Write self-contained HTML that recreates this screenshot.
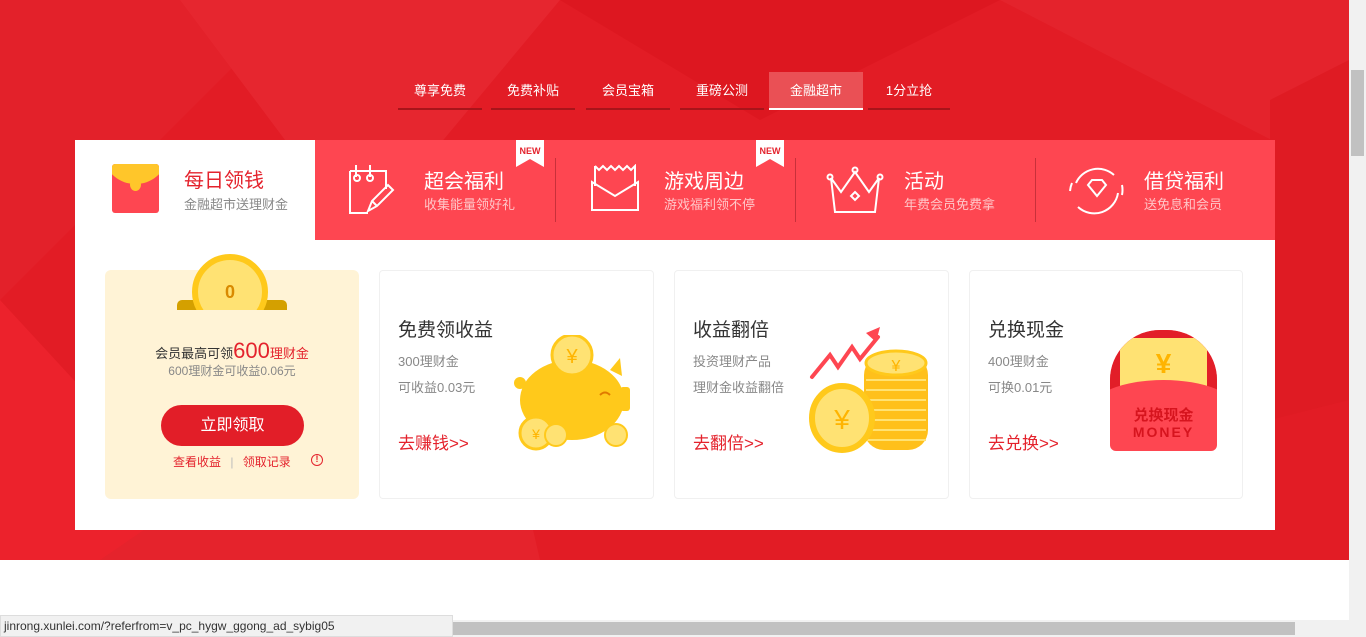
<!DOCTYPE html>
<html><head><meta charset="utf-8"><style>
*{margin:0;padding:0;box-sizing:border-box}
body{width:1366px;height:637px;overflow:hidden;background:#fff;font-family:"Liberation Sans","Noto Sans CJK SC",sans-serif;position:relative}
.abs{position:absolute}
.bg{left:0;top:0;width:1349px;height:560px;background:#e21c25;overflow:hidden}
.nav a{position:absolute;top:72px;height:38px;width:84px;color:#fff;font-size:13px;text-align:center;line-height:38px;border-bottom:2px solid #a8141a;text-decoration:none}
.nav a.on{background:#ea5055;border-bottom:2px solid #fff}
.panel{left:75px;top:140px;width:1200px;height:390px;background:#fff}
.tabs{left:315px;top:140px;width:960px;height:100px;background:#fe4651}
.t h3{position:absolute;font-size:20px;font-weight:normal;color:#fff}
.t p{position:absolute;font-size:13px;color:#ffc6c8}
.div{top:158px;width:1px;height:64px;background:#c8303a}
.card{top:270px;height:229px;border:1px solid #f0f0f0;border-radius:4px;background:#fff}
.card h4{position:absolute;left:18px;top:44px;font-size:19px;font-weight:normal;color:#333}
.card .s{position:absolute;left:18px;font-size:13px;color:#888}
.card .go{position:absolute;left:18px;top:158px;font-size:17px;color:#e4232d}
</style></head><body>
<div class="abs bg">
<svg width="1349" height="560" style="position:absolute;left:0;top:0">
<polygon points="0,0 300,0 0,300" fill="#e3212a"/>
<polygon points="180,0 560,0 360,240" fill="#e6262f"/>
<polygon points="560,0 1000,0 760,120" fill="#dd1720"/>
<polygon points="1000,0 1349,0 1349,180" fill="#e4232c"/>
<polygon points="0,300 240,560 0,560" fill="#ec222c"/>
<polygon points="100,560 480,300 540,560" fill="#e5232c"/>
<polygon points="1270,100 1349,60 1349,400 1270,420" fill="#df1b23"/>
</svg>
</div>
<div class="nav">
<a style="left:398px">尊享免费</a><a style="left:491px">免费补贴</a><a style="left:586px">会员宝箱</a><a style="left:680px">重磅公测</a><a class="on" style="left:769px;width:94px">金融超市</a><a style="left:868px;width:82px">1分立抢</a>
</div>
<div class="abs panel"></div>
<div class="abs tabs"></div>
<div class="abs" style="left:112px;top:164px;width:47px;height:49px;background:#fe4651;border-radius:3px;overflow:hidden">
<div style="position:absolute;left:-6px;top:-30px;width:59px;height:50px;border-radius:50%;background:#ffc62a"></div>
<div style="position:absolute;left:18px;top:14px;width:11px;height:13px;border-radius:50%;background:#ffc62a"></div></div>
<div class="abs" style="left:184px;top:164px;font-size:20px;color:#e4232d">每日领钱</div>
<div class="abs" style="left:184px;top:194px;font-size:13px;color:#888">金融超市送理财金</div>
<div class="t">
<svg class="abs" style="left:348px;top:163px" width="48" height="52" fill="none" stroke="#fff" stroke-width="2"><path d="M2 8h36v18M2 8v42h18"/><path d="M8 2v12M22 2v12"/><circle cx="9" cy="15" r="3"/><circle cx="22" cy="15" r="3"/><path d="M20 48l4-10 16-16 5 5-16 16zM24 38l5 5"/></svg>
<h3 style="left:424px;top:165px">超会福利</h3><p style="left:424px;top:194px">收集能量领好礼</p>
<svg class="abs" style="left:591px;top:164px" width="48" height="48" fill="none" stroke="#fff" stroke-width="2"><path d="M4 2l4 4 4-4 4 4 4-4 4 4 4-4 4 4 4-4 4 4 4-4v20M4 2v20"/><path d="M1 18v28h46V18L24 32z"/></svg>
<h3 style="left:664px;top:165px">游戏周边</h3><p style="left:664px;top:194px">游戏福利领不停</p>
<svg class="abs" style="left:826px;top:166px" width="58" height="48" fill="none" stroke="#fff" stroke-width="2"><path d="M5 12l10 14 14-20 14 20 10-14-4 34H9z"/><circle cx="29" cy="4" r="2.5"/><circle cx="4" cy="11" r="2.5"/><circle cx="54" cy="11" r="2.5"/><path d="M29 26l4 4-4 4-4-4z"/></svg>
<h3 style="left:904px;top:165px">活动</h3><p style="left:904px;top:194px">年费会员免费拿</p>
<svg class="abs" style="left:1068px;top:163px" width="56" height="54" fill="none" stroke="#fff" stroke-width="2"><path d="M8 20A24 24 0 0 1 46 12M50 30A24 24 0 0 1 10 44M2 28A25 25 0 0 1 4 20M54 22a25 25 0 0 1 0 10"/><path d="M20 22l4-5h10l4 5-9 11z"/></svg>
<h3 style="left:1144px;top:165px">借贷福利</h3><p style="left:1144px;top:194px">送免息和会员</p>
</div>
<div class="abs div" style="left:555px"></div><div class="abs div" style="left:795px"></div><div class="abs div" style="left:1035px"></div>
<svg class="abs" style="left:516px;top:140px" width="28" height="28"><path d="M0 0h28v27l-14-8-14 8z" fill="#fff"/><text x="14" y="14" fill="#e4232d" font-size="9" font-weight="bold" text-anchor="middle" font-family="Liberation Sans">NEW</text></svg>
<svg class="abs" style="left:756px;top:140px" width="28" height="28"><path d="M0 0h28v27l-14-8-14 8z" fill="#fff"/><text x="14" y="14" fill="#e4232d" font-size="9" font-weight="bold" text-anchor="middle" font-family="Liberation Sans">NEW</text></svg>
<div class="abs" style="left:105px;top:270px;width:254px;height:229px;background:#fff3d6;border-radius:6px"></div>
<div class="abs" style="left:177px;top:300px;width:110px;height:10px;background:#d4a000;border-radius:5px 5px 0 0"></div>
<div class="abs" style="left:186px;top:254px;width:88px;height:56px;overflow:hidden"><div style="position:absolute;left:6px;top:0;width:76px;height:76px;border-radius:50%;background:#ffe273;border:6px solid #ffc91b"></div><div style="position:absolute;left:0;width:88px;top:28px;text-align:center;font-size:18px;font-weight:bold;color:#d98a00">0</div></div>
<div class="abs" style="left:105px;width:254px;top:338px;text-align:center;font-size:13px;color:#333">会员最高可领<span style="font-size:22px;color:#e4232d">600</span><span style="color:#e4232d">理财金</span></div>
<div class="abs" style="left:105px;width:254px;top:362px;text-align:center;font-size:12px;color:#888">600理财金可收益0.06元</div>
<div class="abs" style="left:161px;top:405px;width:143px;height:41px;background:#e21e28;border-radius:21px;color:#fff;font-size:16px;text-align:center;line-height:41px">立即领取</div>
<div class="abs" style="left:173px;top:453px;font-size:12px;color:#e4232d">查看收益 <span style="color:#bbb;margin:0 6px">|</span> 领取记录</div>
<div class="abs" style="left:311px;top:454px;width:12px;height:12px;border:1.5px solid #e4232d;border-radius:50%;color:#e4232d;font-size:9px;text-align:center;line-height:9px;font-weight:bold">!</div>
<div class="abs card" style="left:379px;width:275px"><h4>免费领收益</h4><div class="s" style="top:80px">300理财金</div><div class="s" style="top:106px">可收益0.03元</div><div class="go">去赚钱&gt;&gt;</div></div>
<svg class="abs" style="left:510px;top:335px" width="130" height="118"><ellipse cx="62" cy="65" rx="52" ry="40" fill="#ffc91b"/><path d="M100 35l10-12 2 18z" fill="#ffc91b"/><rect x="110" y="52" width="10" height="24" rx="3" fill="#ffc91b"/><circle cx="10" cy="48" r="6" fill="#ffc91b"/><circle cx="62" cy="20" r="20" fill="#ffe273" stroke="#ffc91b" stroke-width="3"/><text x="62" y="28" font-size="20" fill="#ffb400" text-anchor="middle">¥</text><path d="M90 60q5-5 10 0" stroke="#e07a00" stroke-width="2" fill="none"/><circle cx="26" cy="98" r="16" fill="#ffe273" stroke="#ffc91b" stroke-width="3"/><text x="26" y="104" font-size="14" fill="#ffb400" text-anchor="middle">¥</text><circle cx="46" cy="100" r="11" fill="#ffe273" stroke="#ffc91b" stroke-width="2"/><circle cx="106" cy="100" r="11" fill="#ffe273" stroke="#ffc91b" stroke-width="2"/></svg>
<div class="abs card" style="left:674px;width:275px"><h4>收益翻倍</h4><div class="s" style="top:80px">投资理财产品</div><div class="s" style="top:106px">理财金收益翻倍</div><div class="go">去翻倍&gt;&gt;</div></div>
<svg class="abs" style="left:806px;top:325px" width="125" height="130"><path d="M6 52l18-22 8 12 14-20 8 12 18-22" stroke="#fe4651" stroke-width="4" fill="none" stroke-linecap="round"/><path d="M60 8l14-6-4 15z" fill="#fe4651"/><rect x="58" y="30" width="64" height="95" rx="20" fill="#ffc01b"/><g stroke="#ffe273" stroke-width="2"><path d="M60 55h60M60 65h60M60 75h60M60 85h60M60 95h60M60 105h60M60 115h60"/></g><ellipse cx="90" cy="38" rx="30" ry="12" fill="#ffe273" stroke="#ffc91b" stroke-width="3"/><text x="90" y="46" font-size="16" fill="#ffb400" text-anchor="middle">¥</text><ellipse cx="36" cy="93" rx="30" ry="32" fill="#ffe273" stroke="#ffc91b" stroke-width="6"/><text x="36" y="104" font-size="28" fill="#ffb400" text-anchor="middle">¥</text></svg>
<div class="abs card" style="left:969px;width:274px"><h4>兑换现金</h4><div class="s" style="top:80px">400理财金</div><div class="s" style="top:106px">可换0.01元</div><div class="go">去兑换&gt;&gt;</div></div>
<div class="abs" style="left:1110px;top:330px;width:107px;height:121px;background:#fe4651;border-radius:50px 50px 6px 6px;overflow:hidden">
<div style="position:absolute;left:0;top:0;width:107px;height:60px;background:#e21e28"></div>
<div style="position:absolute;left:10px;top:8px;width:87px;height:55px;background:#ffe273;border-radius:3px"></div>
<div style="position:absolute;left:-20px;top:50px;width:147px;height:60px;border-radius:50%;background:#fe4651"></div>
<div style="position:absolute;left:0;width:107px;top:18px;text-align:center;font-size:28px;font-weight:bold;color:#ffb400">¥</div>
<div style="position:absolute;left:0;width:107px;top:74px;text-align:center;font-size:15px;font-weight:bold;color:#d6141e">兑换现金</div>
<div style="position:absolute;left:0;width:107px;top:94px;text-align:center;font-size:14px;font-weight:bold;letter-spacing:2px;color:#d6141e">MONEY</div></div>
<div class="abs" style="left:1349px;top:0;width:17px;height:620px;background:#f1f1f1"></div>
<div class="abs" style="left:1351px;top:70px;width:13px;height:86px;background:#c1c1c1"></div>
<div class="abs" style="left:0;top:620px;width:1366px;height:17px;background:#f1f1f1"></div>
<div class="abs" style="left:453px;top:622px;width:842px;height:13px;background:#c1c1c1"></div>
<div class="abs" style="left:0;top:615px;width:453px;height:22px;background:#f1f1f1;border:1px solid #ddd;font-size:12px;color:#333;padding:3px 3px;line-height:14px">jinrong.xunlei.com/?referfrom=v_pc_hygw_ggong_ad_sybig05</div>
</body></html>
